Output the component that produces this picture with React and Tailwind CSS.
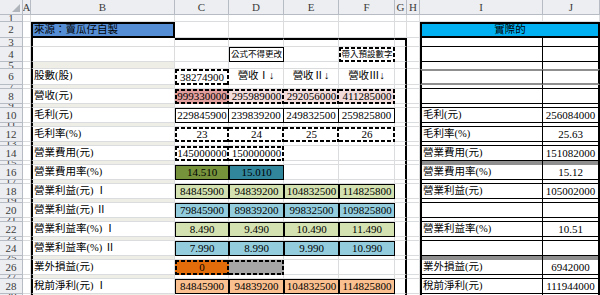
import React from 'react';

const W = ['w-[23px]', 'w-[8px]', 'w-[144px]', 'w-[54px]', 'w-[55px]', 'w-[55px]', 'w-[56px]', 'w-[12px]', 'w-[13px]', 'w-[123px]', 'w-[57px]'];
const GRID = 'border-r border-b border-[#dadcdd]';
const HDR = 'bg-[#eceef1] border-r border-b border-[#b7bcc4] text-[#3c3c3c] justify-center';

// dashed box drawn with background gradients (Excel medium-dashed look)
const DASH = 'justify-center [background-image:linear-gradient(90deg,#000_4px,transparent_4px),linear-gradient(90deg,#000_4px,transparent_4px),linear-gradient(#000_4px,transparent_4px),linear-gradient(#000_4px,transparent_4px)] [background-size:6px_2px,6px_2px,2px_6px,2px_6px] [background-position:0_0,0_100%,0_0,100%_0] [background-repeat:repeat-x,repeat-x,repeat-y,repeat-y]';
const DASHN = 'justify-center [background-image:linear-gradient(90deg,#000_4px,transparent_4px),linear-gradient(90deg,#000_4px,transparent_4px),linear-gradient(#000_4px,transparent_4px)] [background-size:6px_2px,6px_2px,2px_6px] [background-position:0_0,0_100%,100%_0] [background-repeat:repeat-x,repeat-x,repeat-y]';
const SOLID = 'border border-black justify-center';

// Left box edges
const BLEFT = 'border-l-2 border-l-black border-r border-b border-r-[#dadcdd] border-b-[#dadcdd]';
const GRIGHT = 'border-r-2 border-r-black border-b border-b-[#dadcdd]';

// Right table
const RI = 'border-l-2 border-l-black border-r border-r-black border-b border-b-black';
const RJ = 'border-r-2 border-r-black border-b border-b-black';

function Cell({ c, cls = GRID, children, className = '', clip = true }) {
  return (
    <div className={`${W[c]} shrink-0 h-full flex items-center whitespace-nowrap ${clip ? 'overflow-hidden' : ''} ${cls} ${className}`}>
      {children}
    </div>
  );
}

function RowHead({ n }) {
  return <Cell c={0} cls={HDR}>{n}</Cell>;
}

function Row({ h, children }) {
  return <div className={`flex ${h}`}>{children}</div>;
}

const rightData = {
  10: ['毛利(元)', '256084000'],
  12: ['毛利率(%)', '25.63'],
  14: ['營業費用(元)', '151082000'],
  16: ['營業費用率(%)', '15.12'],
  18: ['營業利益(元)', '105002000'],
  20: ['', ''],
  22: ['營業利益率(%)', '10.51'],
  24: ['', ''],
  26: ['業外損益(元)', '6942000'],
  28: ['稅前淨利(元)', '111944000'],
};

const GREEN = 'bg-[#d4e2b1]';
const BLUE = 'bg-[#93cddd]';
const PEACH = 'bg-[#fac090]';

const leftData = [
  { n: 8, label: '營收(元)', cells: [['999330000', `${DASH} bg-[#e29e9c]`], ['295989000', `${DASHN} bg-[#f2dcdb]`], ['292056000', `${DASHN} bg-[#f2dcdb]`], ['411285000', `${DASHN} bg-[#f2dcdb]`]] },
  { n: 10, label: '毛利(元)', cells: [['229845900', `${SOLID} bg-white`], ['239839200', `${SOLID} border-l-0 bg-white`], ['249832500', `${SOLID} border-l-0 bg-white`], ['259825800', `${SOLID} border-l-0 bg-white`]] },
  { n: 12, label: '毛利率(%)', cells: [['23', DASH], ['24', DASHN], ['25', DASHN], ['26', DASHN]] },
  { n: 14, label: '營業費用(元)', cells: [['145000000', DASH], ['150000000', DASHN], null, null] },
  { n: 16, label: '營業費用率(%)', cells: [['14.510', `${SOLID} bg-[#76933c]`], ['15.010', `${SOLID} bg-[#31869b]`], null, null] },
  { n: 18, label: '營業利益(元) Ⅰ', cells: [['84845900', `${SOLID} ${GREEN}`], ['94839200', `${SOLID} ${GREEN}`], ['104832500', `${SOLID} ${GREEN}`], ['114825800', `${SOLID} ${GREEN}`]] },
  { n: 20, label: '營業利益(元) Ⅱ', cells: [['79845900', `${SOLID} ${BLUE}`], ['89839200', `${SOLID} ${BLUE}`], ['99832500', `${SOLID} ${BLUE}`], ['109825800', `${SOLID} ${BLUE}`]] },
  { n: 22, label: '營業利益率(%) Ⅰ', cells: [['8.490', `${SOLID} ${GREEN}`], ['9.490', `${SOLID} ${GREEN}`], ['10.490', `${SOLID} ${GREEN}`], ['11.490', `${SOLID} ${GREEN}`]] },
  { n: 24, label: '營業利益率(%) Ⅱ', cells: [['7.990', `${SOLID} ${BLUE}`], ['8.990', `${SOLID} ${BLUE}`], ['9.990', `${SOLID} ${BLUE}`], ['10.990', `${SOLID} ${BLUE}`]] },
  { n: 26, label: '業外損益(元)', cells: [['0', `${DASH} bg-[#e36c0a]`], ['', `${DASHN} bg-[#a6a6a6]`], null, null] },
  { n: 28, label: '稅前淨利(元) Ⅰ', cells: [['84845900', `${SOLID} ${PEACH}`], ['94839200', `${SOLID} ${PEACH}`], ['104832500', `${SOLID} ${PEACH}`], ['114825800', `${SOLID} ${PEACH}`]] },
];

function OddRow({ n, h = 'h-[4px]', ri = RI, rj = RJ }) {
  return (
    <Row h={h}>
      <RowHead n={n} />
      <Cell c={1} />
      <Cell c={2} cls={`${BLEFT} bg-[#eeede6]`} />
      <Cell c={3} />
      <Cell c={4} />
      <Cell c={5} />
      <Cell c={6} />
      <Cell c={7} cls={GRIGHT} />
      <Cell c={8} />
      <Cell c={9} cls={ri} />
      <Cell c={10} cls={rj} />
    </Row>
  );
}

const GRAYI = 'border-l-2 border-l-black border-r border-r-black bg-[#8f8f8f]';
const GRAYJ = 'border-r-2 border-r-black bg-[#8f8f8f]';

export default function App() {
  return (
    <div className="w-[600px] h-[295px] overflow-hidden bg-white text-black text-[11px] leading-none font-['Liberation_Serif','Noto_Sans_CJK_TC',serif]">
      {/* column header */}
      <Row h="h-[15px]">
        <Cell c={0} cls={`${HDR} relative`}>
          <svg className="absolute right-[2px] bottom-[2px]" width="8" height="8" viewBox="0 0 8 8">
            <path d="M8 0 L8 8 L0 8 Z" fill="#b0b5bc" />
          </svg>
        </Cell>
        {['A', 'B', 'C', 'D', 'E', 'F', 'G', 'H', 'I', 'J'].map((l, i) => (
          <Cell key={l} c={i + 1} cls={HDR}>{l}</Cell>
        ))}
      </Row>

      {/* row 1 */}
      <Row h="h-[7px]">
        <RowHead n={1} />
        {[1, 2, 3, 4, 5, 6, 7, 8, 9, 10].map((c) => <Cell key={c} c={c} />)}
      </Row>

      {/* row 2 */}
      <Row h="h-[16px]">
        <RowHead n={2} />
        <Cell c={1} />
        <Cell c={2} cls="border-2 border-black bg-[#558ed5] pl-[1px] text-[10.5px]">來源：賣瓜仔自製</Cell>
        <Cell c={3} />
        <Cell c={4} />
        <Cell c={5} />
        <Cell c={6} />
        <Cell c={7} />
        <Cell c={8} />
        <div className="w-[180px] shrink-0 h-full flex items-center justify-center border-2 border-black bg-[#00b0f0] text-[10.5px]">實際的</div>
      </Row>

      {/* row 3 */}
      <Row h="h-[9px]">
        <RowHead n={3} />
        <Cell c={1} />
        <Cell c={2} cls={BLEFT} />
        <Cell c={3} cls={`${GRID} border-t-2 border-t-black`} />
        <Cell c={4} cls={`${GRID} border-t-2 border-t-black`} />
        <Cell c={5} cls={`${GRID} border-t-2 border-t-black`} />
        <Cell c={6} cls={`${GRID} border-t-2 border-t-black`} />
        <Cell c={7} cls={`${GRIGHT} border-t-2 border-t-black`} />
        <Cell c={8} />
        <Cell c={9} cls={RI} />
        <Cell c={10} cls={RJ} />
      </Row>

      {/* row 4 */}
      <Row h="h-[15px]">
        <RowHead n={4} />
        <Cell c={1} />
        <Cell c={2} cls={BLEFT} />
        <Cell c={3} />
        <Cell c={4} cls="border-[1.5px] border-black justify-center text-[8.5px]">公式不得更改</Cell>
        <Cell c={5} />
        <Cell c={6} cls={`${DASH} text-[8.5px]`}>帶入預設數字</Cell>
        <Cell c={7} cls={GRIGHT} />
        <Cell c={8} />
        <Cell c={9} cls={RI} />
        <Cell c={10} cls={RJ} />
      </Row>

      <OddRow n={5} h="h-[7px]" ri="border-l-2 border-l-black border-r border-r-black" rj="border-r-2 border-r-black" />

      {/* row 6 */}
      <Row h="h-[16px]">
        <RowHead n={6} />
        <Cell c={1} />
        <Cell c={2} cls={`${BLEFT} pl-[1px] text-[10.5px]`}>股數(股)</Cell>
        <Cell c={3} cls={DASH} clip={false}>38274900</Cell>
        <Cell c={4} className="justify-center text-[10.5px]">營收Ⅰ↓</Cell>
        <Cell c={5} className="justify-center text-[10.5px]">營收Ⅱ↓</Cell>
        <Cell c={6} className="justify-center text-[10.5px]">營收Ⅲ↓</Cell>
        <Cell c={7} cls={GRIGHT} />
        <Cell c={8} />
        <Cell c={9} cls="border-l-2 border-l-black border-r border-r-black border-y-2 border-y-[#8f8f8f]" />
        <Cell c={10} cls="border-r-2 border-r-black border-y-2 border-y-[#8f8f8f]" />
      </Row>

      <OddRow n={7} />

      {leftData.map((r) => (
        <React.Fragment key={r.n}>
          <Row h="h-[15px]">
            <RowHead n={r.n} />
            <Cell c={1} />
            <Cell c={2} cls={`${BLEFT} pl-[1px] text-[10.5px]`}>{r.label}</Cell>
            {r.cells.map((cell, i) =>
              cell ? (
                <Cell key={i} c={i + 3} cls={cell[1]} clip={false}>{cell[0]}</Cell>
              ) : (
                <Cell key={i} c={i + 3} />
              )
            )}
            <Cell c={7} cls={GRIGHT} />
            <Cell c={8} />
            <Cell c={9} cls={`${RI} pl-[1px] text-[10.5px]`}>{rightData[r.n] ? rightData[r.n][0] : ''}</Cell>
            <Cell c={10} cls={`${RJ} justify-center`}>{rightData[r.n] ? rightData[r.n][1] : ''}</Cell>
          </Row>
          {r.n === 14 || r.n === 24 ? (
            <OddRow n={r.n + 1} ri={GRAYI} rj={GRAYJ} />
          ) : (
            <OddRow n={r.n + 1} />
          )}
        </React.Fragment>
      ))}
    </div>
  );
}
